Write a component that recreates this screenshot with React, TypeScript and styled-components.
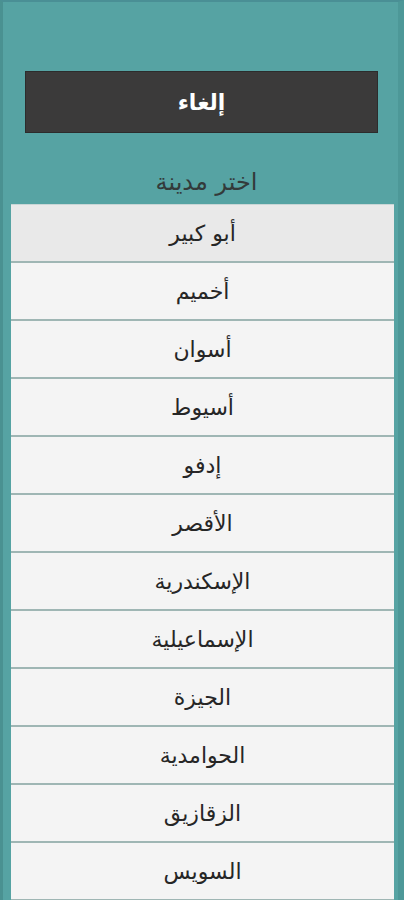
import styled, { createGlobalStyle } from 'styled-components'

const GlobalStyle = createGlobalStyle`
  html, body {
    margin: 0;
    padding: 0;
    background: #55a2a2;
  }
  body {
    font-family: "DejaVu Sans", "Noto Sans", sans-serif;
  }
`

const Screen = styled.div`
  width: 404px;
  height: 900px;
  overflow: hidden;
  box-sizing: border-box;
  background: #56a3a3;
  border-top: 2px solid #4a8f95;
  border-left: 3px solid #4a9191;
  border-right: 6px solid #4d9898;
  display: flex;
  flex-direction: column;
  direction: rtl;
`

const CancelButton = styled.button`
  flex-shrink: 0;
  margin: 69px 20px 0 22px;
  height: 62px;
  background: #3b3a3a;
  border: 1px solid #2c2c2c;
  color: #ffffff;
  font-family: "DejaVu Sans", sans-serif;
  font-size: 22px;
  font-weight: bold;
  cursor: pointer;
`

const Title = styled.div`
  flex-shrink: 0;
  height: 71px;
  box-sizing: border-box;
  padding: 34px 0 0 12px;
  text-align: center;
  color: #333a3a;
  font-size: 24px;
  line-height: 30px;
`

const List = styled.ul`
  flex-shrink: 0;
  list-style: none;
  margin: 0 4px 0 8px;
  padding: 0;
  border-top: 1px solid #c9d6d6;
`

const Row = styled.li<{ $active?: boolean }>`
  height: 56px;
  display: flex;
  align-items: center;
  justify-content: center;
  background: ${(p) => (p.$active ? '#e9e9e9' : '#f4f4f4')};
  border-bottom: 2px solid #9fb6b4;
  color: #262626;
  font-size: 22px;
`

const cities = [
  'أبو كبير',
  'أخميم',
  'أسوان',
  'أسيوط',
  'إدفو',
  'الأقصر',
  'الإسكندرية',
  'الإسماعيلية',
  'الجيزة',
  'الحوامدية',
  'الزقازيق',
  'السويس',
]

export default function App() {
  return (
    <>
      <GlobalStyle />
      <Screen>
        <CancelButton>إلغاء</CancelButton>
        <Title>اختر مدينة</Title>
        <List>
          {cities.map((c, i) => (
            <Row key={c} $active={i === 0}>
              {c}
            </Row>
          ))}
        </List>
      </Screen>
    </>
  )
}
